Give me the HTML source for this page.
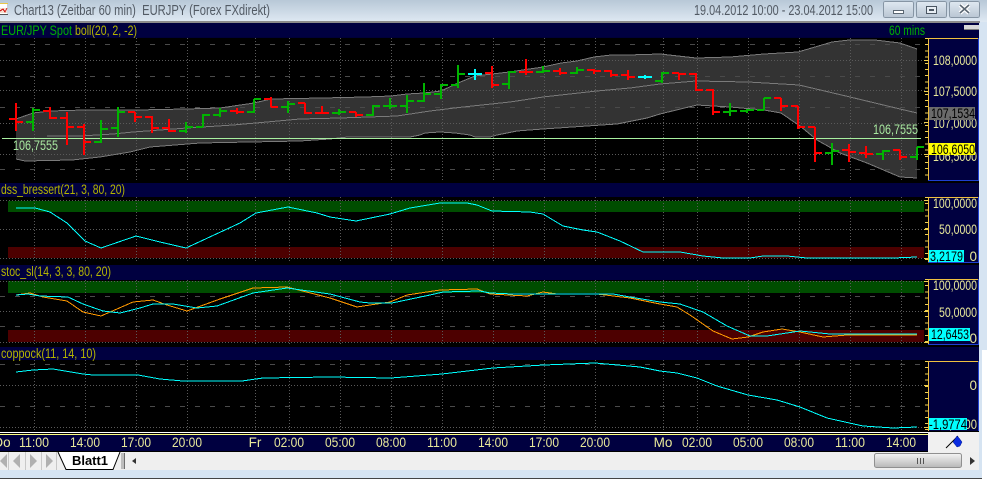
<!DOCTYPE html>
<html><head><meta charset="utf-8"><title>Chart13</title>
<style>
html,body{margin:0;padding:0;background:#fff;overflow:hidden}
svg{display:block}
text{font-family:"Liberation Sans",sans-serif;font-size:13.5px}
.ax{fill:#e8e89a;text-anchor:end}
.tl{fill:#e8e89a;text-anchor:middle}
.hd{fill:#b4b400}
.grid{stroke:#5a5a5a;stroke-width:1;stroke-dasharray:1 2;fill:none}
.dash{stroke:#4a4a4a;stroke-width:1;stroke-dasharray:5 10;fill:none}
</style></head><body>
<svg xmlns="http://www.w3.org/2000/svg" width="987" height="479" viewBox="0 0 987 479">
<defs>
<linearGradient id="tb" x1="0" y1="0" x2="0" y2="1"><stop offset="0" stop-color="#b8c8d7"/><stop offset="1" stop-color="#dfe9f3"/></linearGradient>
<linearGradient id="btn" x1="0" y1="0" x2="0" y2="1"><stop offset="0" stop-color="#dfe8f1"/><stop offset="1" stop-color="#b9c6d3"/></linearGradient>
<linearGradient id="thumb" x1="0" y1="0" x2="0" y2="1"><stop offset="0" stop-color="#f4f4f4"/><stop offset="1" stop-color="#b8b8b8"/></linearGradient>
</defs>
<!-- window frame -->
<rect width="987" height="479" fill="#d6e4f2"/>
<rect x="0" y="0" width="987" height="22" fill="url(#tb)"/>
<rect x="0" y="21" width="980" height="2" fill="#8c8c8c"/>
<!-- title icon -->
<g shape-rendering="crispEdges">
<rect x="0" y="3" width="7" height="12" fill="#fff"/>
<rect x="0" y="8" width="7" height="5" fill="#f7e0d0"/>
<path d="M0 11L3 9L5 12L7 8" stroke="#d02020" fill="none"/>
<rect x="0" y="14" width="8" height="1" fill="#555"/>
<rect x="0" y="3" width="8" height="1" fill="#e8c84a"/>
</g>
<text x="14" y="15" fill="#525a64" style="font-size:14.5px" textLength="256" lengthAdjust="spacingAndGlyphs" xml:space="preserve">Chart13 (Zeitbar 60 min)  EURJPY (Forex FXdirekt)</text>
<text x="694" y="15" fill="#525a64" style="font-size:14.5px" textLength="179" lengthAdjust="spacingAndGlyphs">19.04.2012 10:00 - 23.04.2012 15:00</text>
<!-- window buttons -->
<g shape-rendering="crispEdges">
<rect x="883.5" y="1.5" width="30" height="16" rx="2" fill="url(#btn)" stroke="#8695a4"/>
<rect x="916.5" y="1.5" width="30" height="16" rx="2" fill="url(#btn)" stroke="#8695a4"/>
<rect x="949.5" y="1.5" width="30" height="16" rx="2" fill="url(#btn)" stroke="#8695a4"/>
<rect x="893.5" y="10.5" width="10" height="3" fill="#fff" stroke="#5a6672"/>
<rect x="926.5" y="6.5" width="10" height="7" fill="#e8eef4" stroke="#4a5662"/>
<rect x="929" y="9" width="5" height="2" fill="#4a5662"/>
</g>
<path d="M960 5L969 13M969 5L960 13" stroke="#fff" stroke-width="4"/>
<path d="M960 5L969 13M969 5L960 13" stroke="#5a6672" stroke-width="1.6"/>

<!-- main navy area -->
<rect x="0" y="23" width="979" height="412" fill="#000040"/>
<rect x="0" y="37" width="979" height="1" fill="#000038"/>
<!-- black chart panes -->
<rect x="0" y="38" width="928" height="145" fill="#000"/>
<rect x="0" y="197" width="928" height="68" fill="#000"/>
<rect x="0" y="280" width="928" height="67" fill="#000"/>
<rect x="0" y="360" width="928" height="75" fill="#000"/>
<!-- axis black separators -->
<rect x="928" y="180" width="51" height="3" fill="#000"/>
<rect x="928" y="262" width="51" height="3" fill="#000"/>
<rect x="928" y="344" width="51" height="3" fill="#000"/>
<!-- colored zones -->
<g shape-rendering="crispEdges">
<rect x="8" y="201" width="916" height="11" fill="#004d00"/>
<rect x="8" y="247" width="916" height="11" fill="#4d0000"/>
<rect x="8" y="281" width="916" height="12" fill="#004d00"/>
<rect x="8" y="330" width="916" height="12" fill="#4d0000"/>
</g>
<!-- bollinger band -->
<polygon fill="#333333" shape-rendering="crispEdges" points="16,119 33,113 50,111 84,110 136,110 186,109 220,108 254,103 271,99 322,98 365,97 391,96 407,94 424,93 441,91 458,83 475,76 492,74 509,72 543,67 561,63 577,61 594,57 611,55 628,55 660,54 696,58 730,57 764,54 798,52 815,47 832,42 849,40 875,40 900,43 917,49 917,178 900,177 867,163 840,153 817,140 800,126 781,113 764,110 730,107 697,105 660,114 647,118 617,124 587,126 543,129 517,131 497,135 490,137 475,137 470,135 455,133 440,132 425,133 420,135 410,137 348,137 330,139 300,141 250,142 200,143 150,147 130,152 100,157 72,160 25,161 16,159"/>
<!-- grid -->
<g shape-rendering="crispEdges">
<path class="grid" d="M0 60.5H925M0 90.5H925M0 123.5H925M0 154.5H925M0 200.5H925M0 229.5H925M0 258.5H925M0 281.5H925M0 311.5H925M0 342.5H925M0 385.5H925M0 427.5H925"/>
<path class="dash" d="M0 44.5H925M0 76.5H925M0 107.5H925M0 169.5H925M0 296.5H925M0 326.5H925M0 364.5H925M0 406.5H925"/>
<path class="grid" d="M34.5 38V180M85.5 38V180M136.5 38V180M187.5 38V180M255.5 38V180M289.5 38V180M340.5 38V180M391.5 38V180M442.5 38V180M493.5 38V180M544.5 38V180M595.5 38V180M663.5 38V180M697.5 38V180M748.5 38V180M799.5 38V180M850.5 38V180M901.5 38V180"/>
<path class="grid" d="M34.5 197V262M85.5 197V262M136.5 197V262M187.5 197V262M255.5 197V262M289.5 197V262M340.5 197V262M391.5 197V262M442.5 197V262M493.5 197V262M544.5 197V262M595.5 197V262M663.5 197V262M697.5 197V262M748.5 197V262M799.5 197V262M850.5 197V262M901.5 197V262"/>
<path class="grid" d="M34.5 280V345M85.5 280V345M136.5 280V345M187.5 280V345M255.5 280V345M289.5 280V345M340.5 280V345M391.5 280V345M442.5 280V345M493.5 280V345M544.5 280V345M595.5 280V345M663.5 280V345M697.5 280V345M748.5 280V345M799.5 280V345M850.5 280V345M901.5 280V345"/>
<path class="grid" d="M34.5 360V432M85.5 360V432M136.5 360V432M187.5 360V432M255.5 360V432M289.5 360V432M340.5 360V432M391.5 360V432M442.5 360V432M493.5 360V432M544.5 360V432M595.5 360V432M663.5 360V432M697.5 360V432M748.5 360V432M799.5 360V432M850.5 360V432M901.5 360V432"/>
</g>
<!-- band lines -->
<g fill="none" stroke="#7a7a7a" stroke-width="1" shape-rendering="crispEdges">
<polyline points="16,119 33,113 50,111 84,110 136,110 186,109 220,108 254,103 271,99 322,98 365,97 391,96 407,94 424,93 441,91 458,83 475,76 492,74 509,72 543,67 561,63 577,61 594,57 611,55 628,55 660,54 696,58 730,57 764,54 798,52 815,47 832,42 849,40 875,40 900,43 917,49"/>
<polyline points="47,136 80,136 113,134 133,132 187,128 233,125 267,122 300,119 340,118 397,116 430,111 463,107 510,102 543,97 597,91 630,88 660,84 696,81 748,82 799,85 850,97 900,109 917,113"/>
<polyline points="16,159 25,161 72,160 100,157 130,152 150,147 200,143 250,142 300,141 330,139 348,137 410,137 420,135 425,133 440,132 455,133 470,135 475,137 490,137 497,135 517,131 543,129 587,126 617,124 647,118 660,114 697,105 730,107 764,110 781,113 800,126 817,140 840,153 867,163 900,177 917,178"/>
</g>
<!-- horizontal level -->
<rect x="2" y="138" width="919" height="1" fill="#a8f0a0"/>
<text x="13" y="150" fill="#a8e8a0" textLength="45" lengthAdjust="spacingAndGlyphs">106,7555</text>
<text x="873" y="134" fill="#a8e8a0" textLength="45" lengthAdjust="spacingAndGlyphs">106,7555</text>
<!-- OHLC bars -->
<g fill="none" stroke-width="2" shape-rendering="crispEdges">
<path stroke="#ff0000" d="M16 103V131M9 119H16M16 122H23M50 107V119M43 111H50M50 118H57M67 112V145M60 118H67M67 127H74M84 124V155M77 127H84M84 142H91M135 112V122M128 112H135M135 117H142M152 116V133M145 117H152M152 128H159M169 119V132M162 128H169M169 131H176M237 108V114M230 111H237M237 112H244M271 97V107M264 99H271M271 107H278M305 103V114M298 103H305M305 113H312M322 106V114M315 113H322M322 113H329M356 112V117M349 112H356M356 115H363M492 66V88M485 73H492M492 85H499M526 59V75M519 72H526M526 72H533M560 68V75M553 71H560M560 73H567M594 69V74M587 70H594M594 71H601M611 70V77M604 71H611M611 75H618M628 70V80M621 75H628M628 77H635M679 73V80M672 73H679M679 74H686M696 73V91M689 74H696M696 90H703M713 89V115M706 90H713M713 112H720M781 98V111M774 98H781M781 106H788M798 106V129M791 106H798M798 127H805M815 127V162M808 127H815M815 153H822M849 144V162M842 150H849M849 152H856M866 146V158M859 153H866M866 154H873M900 150V160M893 150H900M900 157H907"/>
<path stroke="#00b400" d="M33 108V131M26 122H33M33 110H40M101 120V143M94 142H101M101 129H108M118 107V137M111 128H118M118 112H125M186 122V133M179 131H186M186 127H193M203 114V127M196 127H203M203 115H210M220 108V117M213 115H220M220 111H227M254 99V113M247 112H254M254 99H261M288 101V113M281 107H288M288 104H295M339 109V115M332 113H339M339 112H346M373 105V116M366 115H373M373 106H380M390 98V109M383 106H390M390 106H397M407 95V113M400 106H407M407 101H414M424 83V102M417 101H424M424 94H431M441 84V99M434 94H441M441 85H448M458 65V88M451 85H458M458 74H465M509 71V89M502 84H509M509 72H516M543 66V73M536 72H543M543 71H550M577 67V74M570 73H577M577 70H584M662 72V83M655 81H662M662 73H669M730 103V116M723 112H730M730 111H737M747 109V113M740 111H747M747 110H754M764 98V110M757 110H764M764 98H771M832 143V165M825 153H832M832 151H839M883 150V160M876 154H883M883 151H890M917 147V160M910 157H917M917 147H924"/>
<path stroke="#00ffff" d="M475 69V80M468 74H482M645 75V79M638 77H652"/>
</g>
<!-- oscillators -->
<g fill="none" stroke-width="1" shape-rendering="crispEdges">
<polyline stroke="#00ffff" points="16,208 35,208 50,212 67,223 85,241 101,248 136,236 160,242 186,248 240,223 256,213 288,207 317,213 330,217 356,221 390,214 410,208 440,203 467,203 477,205 492,211 530,212 543,214 563,226 583,230 597,232 620,241 643,252 680,252 703,256 723,258 750,258 763,256 787,256 807,258 827,258 857,258 877,258 893,258 917,257"/>
<polyline stroke="#ff9900" points="16,295 30,293 43,297 67,301 83,312 101,316 133,302 153,300 167,305 187,311 220,299 253,288 287,287 330,298 357,307 370,305 390,302 407,295 440,290 477,289 490,294 527,296 543,292 557,294 597,294 630,298 660,304 677,307 690,315 713,331 732,339 748,337 763,332 782,329 800,332 823,337 847,335 917,335"/>
<polyline stroke="#00ffff" points="16,295 28,294 40,296 68,297 83,304 103,311 120,313 140,308 153,304 173,304 197,308 217,306 253,293 287,288 330,294 360,302 370,303 392,303 430,295 443,292 480,291 490,293 513,294 563,294 613,294 630,297 660,302 680,304 703,312 727,326 750,336 767,336 800,331 830,334 917,334"/>
<polyline stroke="#00ffff" points="16,372 33,370 53,369 83,374 93,375 138,375 160,379 183,381 242,381 263,378 330,377 391,378 442,374 493,368 544,365 595,363 640,367 660,371 677,373 697,378 717,386 748,395 777,400 800,407 827,418 863,426 893,428 917,427"/>
</g>
<!-- axis boxes -->
<g shape-rendering="crispEdges" fill="none">
<path stroke="#2040d0" d="M978.5 38V180.5H928M978.5 197V262.5H928M978.5 279V344.5H928M978.5 361V431"/>
<path stroke="#f0c040" d="M928.5 180V38.5H978M928.5 262V197.5H978M928.5 344V279.5H978M928.5 431V361.5H978"/>
<g stroke="#f0d050" stroke-width="1">
<path stroke-width="3" stroke-dasharray="1 5.2" d="M926.5 38V180M926.5 197V262M926.5 279V344M926.5 361V431"/>
<path d="M924 60.5H928M924 91.5H928M924 122.5H928M924 154.5H928M924 200.5H928M924 229.5H928M924 258.5H928M924 281.5H928M924 311.5H928M924 342.5H928M924 385.5H928M924 427.5H928"/>
</g>
</g>
<!-- axis labels -->
<text class="ax" x="977" y="65" textLength="44" lengthAdjust="spacingAndGlyphs">108,0000</text>
<text class="ax" x="977" y="96" textLength="44" lengthAdjust="spacingAndGlyphs">107,5000</text>
<text class="ax" x="977" y="128" textLength="44" lengthAdjust="spacingAndGlyphs">107,0000</text>
<text class="ax" x="977" y="161" textLength="44" lengthAdjust="spacingAndGlyphs">106,5000</text>
<rect x="929" y="107" width="46" height="13" fill="#6b6b6b"/>
<text x="931" y="118" fill="#000" textLength="44" lengthAdjust="spacingAndGlyphs">107,1534</text>
<rect x="929" y="143" width="46" height="12" fill="#ffff00"/>
<text x="931" y="154" fill="#000" textLength="44" lengthAdjust="spacingAndGlyphs">106,6050</text>
<text class="ax" x="977" y="208" textLength="44" lengthAdjust="spacingAndGlyphs">100,0000</text>
<text class="ax" x="977" y="234" textLength="38" lengthAdjust="spacingAndGlyphs">50,0000</text>
<text class="ax" x="977" y="261">0</text>
<rect x="929" y="250" width="35" height="12" fill="#00ffff"/>
<text x="930" y="261" fill="#000" textLength="33" lengthAdjust="spacingAndGlyphs">3,2179</text>
<text class="ax" x="977" y="290" textLength="44" lengthAdjust="spacingAndGlyphs">100,0000</text>
<text class="ax" x="977" y="317" textLength="38" lengthAdjust="spacingAndGlyphs">50,0000</text>
<text class="ax" x="977" y="343">0</text>
<rect x="929" y="328" width="41" height="13" fill="#00ffff"/>
<text x="931" y="339" fill="#000" textLength="38" lengthAdjust="spacingAndGlyphs">12,6453</text>
<text class="ax" x="977" y="390">0</text>
<text class="ax" x="977" y="429" textLength="38" lengthAdjust="spacingAndGlyphs">-2,0000</text>
<rect x="929" y="418" width="38" height="12" fill="#00ffff"/>
<text x="929" y="429" fill="#000" textLength="38" lengthAdjust="spacingAndGlyphs">-1,9774</text>
<!-- headers -->
<text x="1" y="35" fill="#00b000" textLength="71" lengthAdjust="spacingAndGlyphs">EUR/JPY Spot</text>
<text x="75" y="35" class="hd" textLength="62" lengthAdjust="spacingAndGlyphs">boll(20, 2, -2)</text>
<text x="889" y="35" fill="#00b000" textLength="36" lengthAdjust="spacingAndGlyphs">60 mins</text>
<rect x="964" y="25" width="15" height="4" fill="#d8d8d8"/>
<rect x="964" y="29" width="15" height="1" fill="#808080"/>
<text x="1" y="194" class="hd" textLength="124" lengthAdjust="spacingAndGlyphs">dss_bressert(21, 3, 80, 20)</text>
<text x="1" y="276" class="hd" textLength="110" lengthAdjust="spacingAndGlyphs">stoc_sl(14, 3, 3, 80, 20)</text>
<text x="1" y="358" class="hd" textLength="95" lengthAdjust="spacingAndGlyphs">coppock(11, 14, 10)</text>
<!-- time axis -->
<rect x="0" y="432" width="928" height="1" fill="#ffffff"/>
<rect x="0" y="434" width="928" height="1" fill="#ffff80"/>
<rect x="0" y="435" width="928" height="17" fill="#000040"/>
<rect x="928" y="432" width="51" height="20" fill="#f0f0f0"/>
<rect x="928" y="431" width="51" height="1" fill="#000"/>
<g>
<text class="tl" x="2" y="447">Do</text>
<text class="tl" x="34" y="447" textLength="30" lengthAdjust="spacingAndGlyphs">11:00</text>
<text class="tl" x="85" y="447" textLength="30" lengthAdjust="spacingAndGlyphs">14:00</text>
<text class="tl" x="136" y="447" textLength="30" lengthAdjust="spacingAndGlyphs">17:00</text>
<text class="tl" x="187" y="447" textLength="30" lengthAdjust="spacingAndGlyphs">20:00</text>
<text class="tl" x="255" y="447">Fr</text>
<text class="tl" x="289" y="447" textLength="30" lengthAdjust="spacingAndGlyphs">02:00</text>
<text class="tl" x="340" y="447" textLength="30" lengthAdjust="spacingAndGlyphs">05:00</text>
<text class="tl" x="391" y="447" textLength="30" lengthAdjust="spacingAndGlyphs">08:00</text>
<text class="tl" x="442" y="447" textLength="30" lengthAdjust="spacingAndGlyphs">11:00</text>
<text class="tl" x="493" y="447" textLength="30" lengthAdjust="spacingAndGlyphs">14:00</text>
<text class="tl" x="544" y="447" textLength="30" lengthAdjust="spacingAndGlyphs">17:00</text>
<text class="tl" x="595" y="447" textLength="30" lengthAdjust="spacingAndGlyphs">20:00</text>
<text class="tl" x="663" y="447">Mo</text>
<text class="tl" x="697" y="447" textLength="30" lengthAdjust="spacingAndGlyphs">02:00</text>
<text class="tl" x="748" y="447" textLength="30" lengthAdjust="spacingAndGlyphs">05:00</text>
<text class="tl" x="799" y="447" textLength="30" lengthAdjust="spacingAndGlyphs">08:00</text>
<text class="tl" x="850" y="447" textLength="30" lengthAdjust="spacingAndGlyphs">11:00</text>
<text class="tl" x="901" y="447" textLength="30" lengthAdjust="spacingAndGlyphs">14:00</text>
</g>
<!-- flag -->
<path d="M946 448L958 436" stroke="#000" stroke-width="1"/>
<polygon points="957,436 959,438 962,442 960,446 957,447 953,442" fill="#0a2ce0" stroke="#001a90" stroke-width=".5"/>
<!-- tab bar -->
<rect x="0" y="452" width="979" height="18" fill="#efefef"/>
<rect x="0" y="451" width="928" height="1" fill="#000"/>
<rect x="0" y="470" width="979" height="8" fill="#d6e4f2"/>
<g fill="#b0b0b0">
<polygon points="7,454 7,468 0,461"/>
<polygon points="20,454 20,468 13,461"/>
<polygon points="30,454 30,468 37,461"/>
<polygon points="46,454 46,468 53,461"/>
</g>
<path d="M8.5 452V470M25.5 452V470M41.5 452V470M56.5 452V470" stroke="#c8c8c8"/>
<polygon points="58,452 66,469.5 113,469.5 120,452" fill="#fff"/>
<path d="M58 452L66 469.5H113L120 452" fill="none" stroke="#000"/>
<text x="72" y="465" fill="#000" style="font-size:13px;font-weight:bold" textLength="36" lengthAdjust="spacingAndGlyphs">Blatt1</text>
<rect x="121" y="453" width="3" height="16" fill="#bdbdbd"/>
<rect x="124" y="453" width="1" height="16" fill="#707070"/>
<polygon points="136,458 136,464 132,461" fill="#333"/>
<rect x="874.5" y="453.5" width="87" height="14" rx="2" fill="url(#thumb)" stroke="#909090"/>
<path d="M917.5 458V464M920.5 458V464M923.5 458V464" stroke="#555"/>
<polygon points="970,457 970,465 975,461" fill="#333"/>
<!-- right/bottom edges -->
<rect x="979" y="23" width="8" height="456" fill="#d6e4f2"/>
<rect x="982" y="350" width="5" height="129" fill="#ffffff"/>
<rect x="0" y="478" width="982" height="1" fill="#444"/>
</svg>
</body></html>
